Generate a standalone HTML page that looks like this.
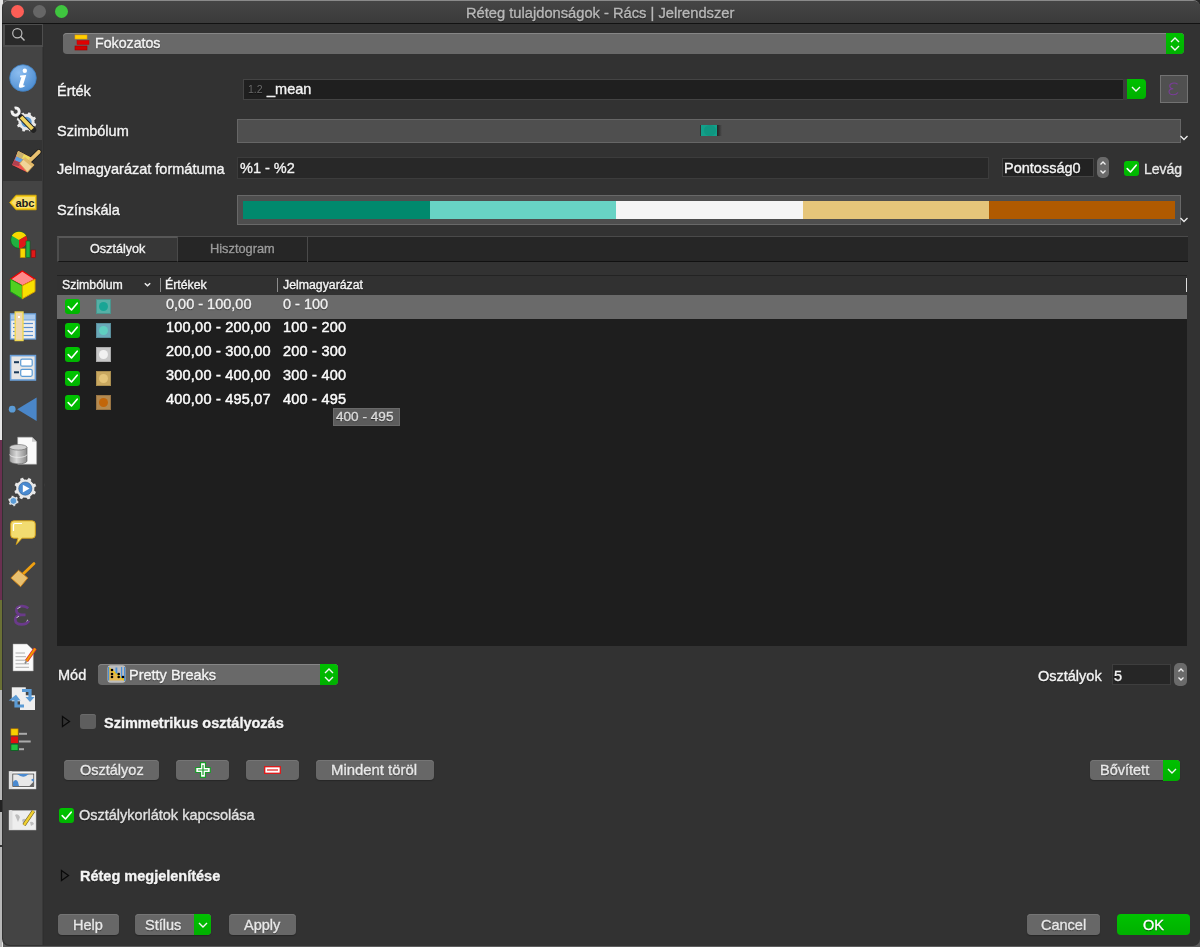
<!DOCTYPE html>
<html><head><meta charset="utf-8">
<style>
*{box-sizing:border-box;margin:0;padding:0}
html,body{width:1200px;height:947px;overflow:hidden;background:#5c5c5c}
body{font-family:"Liberation Sans",sans-serif;font-size:14.5px;color:#f4f4f4;position:relative}
.a{position:absolute}
.t{position:absolute;white-space:nowrap;line-height:1;-webkit-text-stroke:0.35px currentColor;text-shadow:0 0.5px 1px rgba(0,0,0,.55);will-change:transform}
.btn{position:absolute;background:#676767;border-radius:4px;box-shadow:inset 0 1px 0 #757575, 0 1px 1px #262626}
.grn{position:absolute;background:linear-gradient(#00c000,#00b000);border-radius:0 4px 4px 0}
.cb{position:absolute;width:15px;height:15px;background:linear-gradient(#00c400,#00b400);border-radius:3px}
.field{position:absolute;background:#262626;border:1px solid #424242}
</style></head>
<body>
<!-- outside strip -->
<div class="a" style="left:0;top:0;width:3px;height:947px;background:#e6e6e6"></div><div class="a" style="left:0;top:440px;width:2px;height:160px;background:#6a3050"></div><div class="a" style="left:0;top:600px;width:2px;height:90px;background:#6a7035"></div><div class="a" style="left:0;top:690px;width:2px;height:257px;background:#b8b8b8"></div><div class="a" style="left:0;top:800px;width:2px;height:12px;background:#222"></div><div class="a" style="left:0;top:845px;width:2px;height:2px;background:#333"></div>
<div class="a" style="left:1192px;top:0;width:8px;height:8px;background:#262626"></div>
<!-- window -->
<div class="a" style="left:2px;top:0;width:1198px;height:946px;background:#323232;border-radius:7px;border-top:1px solid #8a8a8a"></div>
<!-- title -->
<div class="a" style="left:3px;top:1px;width:1197px;height:22px;background:linear-gradient(#454545,#3a3a3a);border-radius:6px 6px 0 0"></div>
<div class="a" style="left:2px;top:23px;width:1198px;height:1px;background:#121212"></div>
<div class="a" style="left:11px;top:5px;width:13px;height:13px;border-radius:50%;background:#fd5e56"></div>
<div class="a" style="left:33px;top:5px;width:13px;height:13px;border-radius:50%;background:#666"></div>
<div class="a" style="left:55px;top:5px;width:13px;height:13px;border-radius:50%;background:#3fc53f"></div>
<div class="t" style="left:466px;top:5.7px;color:#b8b8b8;font-size:14.7px">Réteg tulajdonságok - Rács | Jelrendszer</div>

<!-- sidebar -->
<div class="a" style="left:3px;top:24px;width:39px;height:921px;background:#444;border-radius:0 0 0 7px"></div>
<div class="a" style="left:3px;top:24px;width:40px;height:23px;background:#292929;border:1px solid #4e4e4e;border-left-width:2px;border-bottom-width:2px"></div>
<svg class="a" style="left:11px;top:27px" width="16" height="16" viewBox="0 0 16 16"><circle cx="6.3" cy="6.3" r="4.6" fill="none" stroke="#bdbdbd" stroke-width="1.2"/><line x1="9.6" y1="9.6" x2="13.5" y2="13.5" stroke="#bdbdbd" stroke-width="1.4"/></svg>
<div class="a" style="left:3px;top:140px;width:39px;height:41px;background:#333"></div>
<div class="a" style="left:42px;top:47px;width:1px;height:898px;background:#393939"></div><div class="a" style="left:43px;top:47px;width:1px;height:898px;background:#2f2f2f"></div>

<!-- sidebar icons -->
<svg class="a" style="left:0;top:0" width="45" height="947" viewBox="0 0 45 947">
 <defs>
  <radialGradient id="gblue" cx="0.35" cy="0.3" r="0.8"><stop offset="0" stop-color="#8cbdf0"/><stop offset="1" stop-color="#4a8bd0"/></radialGradient>
  <linearGradient id="gcyl" x1="0" x2="1"><stop offset="0" stop-color="#9a9a9a"/><stop offset="0.4" stop-color="#d8d8d8"/><stop offset="1" stop-color="#8a8a8a"/></linearGradient>
 </defs>
 <!-- info -->
 <circle cx="23" cy="78" r="13.3" fill="url(#gblue)" stroke="#3f7fc0" stroke-width="0.8"/>
 <circle cx="24.8" cy="70.8" r="2.2" fill="#fff"/>
 <path d="M20.2 75.5 L26.2 75 L23.3 84.5 Q23 86 24.8 85.2 L24.6 86.5 Q21 88.3 19.4 87.5 Q18.4 86.7 19 85 L21.4 77.2 L20 77.2 Z" fill="#fff"/>
 <!-- wrench + gear -->
 <g>
  <path d="M34.86 122.84 L36.61 123.99 L35.65 126.73 L33.57 126.54 L32.77 127.59 L31.82 128.50 L32.24 130.55 L29.63 131.81 L28.29 130.21 L26.98 130.39 L25.66 130.36 L24.51 132.11 L21.77 131.15 L21.96 129.07 L20.91 128.27 L20.00 127.32 L17.95 127.74 L16.69 125.13 L18.29 123.79 L18.11 122.48 L18.14 121.16 L16.39 120.01 L17.35 117.27 L19.43 117.46 L20.23 116.41 L21.18 115.50 L20.76 113.45 L23.37 112.19 L24.71 113.79 L26.02 113.61 L27.34 113.64 L28.49 111.89 L31.23 112.85 L31.04 114.93 L32.09 115.73 L33.00 116.68 L35.05 116.26 L36.31 118.87 L34.71 120.21 L34.89 121.52Z" fill="#e8e8e8" stroke="#222" stroke-width="0.5"/>
  <circle cx="26.5" cy="122" r="5.2" fill="#5b9bd5"/>
  <path d="M14.59 108.12 A3.6 3.6 0 1 1 12.12 110.59" fill="none" stroke="#f2f2f2" stroke-width="3"/><line x1="18" y1="114" x2="21.5" y2="117.5" stroke="#f2f2f2" stroke-width="3.2"/>
  <line x1="21" y1="117" x2="33.5" y2="130" stroke="#222" stroke-width="5.5" stroke-linecap="round"/>
  <line x1="21" y1="117" x2="32.5" y2="129" stroke="#f2d560" stroke-width="3.8"/>
 </g>
 <!-- selected brush -->
 <g>
  <line x1="38.8" y1="151.8" x2="30" y2="160.5" stroke="#1c1c1c" stroke-width="5.4" stroke-linecap="round"/>
  <polygon points="18.1,150.6 31.8,157.6 27,172.6 11.6,165.2" fill="#222"/>
  <polygon points="18.1,151 31.5,157.8 26.9,172.3 12,165" fill="#f05050"/>
  <polygon points="18.1,151 31.5,157.8 30,162.5 16.3,156.3" fill="#eedc60"/>
  <polygon points="16.3,156.3 30,162.5 28.8,166.2 14.6,160.2" fill="#60a0e0"/>
  <polygon points="18.1,151 24,154 22,158.5 16.3,156.3" fill="#c8b070"/>
  <polygon points="14.6,160.2 20,162.4 19,166 12,165" fill="#b04050"/>
  <line x1="38.8" y1="151.8" x2="30" y2="160.5" stroke="#e8c070" stroke-width="3.8" stroke-linecap="round"/>
  <polygon points="24.8,157.7 34.1,164.9 27.4,172.3 19.8,163.6" fill="#f0d498" stroke="#d8a850" stroke-width="0.8"/>
  <polygon points="25,158 33.8,164.8 31.8,166.8 23.5,160" fill="#e0b868"/>
 </g>
 <!-- abc -->
 <polygon points="9.6,202.5 16,195.2 36.2,195.2 36.2,209.8 16,209.8" fill="#f8d020" stroke="#d8a800" stroke-width="0.8"/>
 <polygon points="11.6,202.5 16.6,197 35,197 35,208 16.6,208" fill="#f8e070"/>
 <text x="15.5" y="206.6" font-family="Liberation Sans" font-weight="bold" font-size="11.2" fill="#1a1a1a" letter-spacing="-0.2">abc</text>
 <!-- chart -->
 <circle cx="19" cy="240" r="8.4" fill="#20b040" stroke="#106020" stroke-width="0.8"/>
 <path d="M19 240 L11.8 235.8 A8.4 8.4 0 0 1 26.2 235.8 Z" fill="#f8d800"/>
 <path d="M19 240 L26.2 235.8 A8.4 8.4 0 0 1 19 248.4 Z" fill="#e01818"/>
 <rect x="20.2" y="248.7" width="5" height="9" fill="#f8d800" stroke="#b08000" stroke-width="0.6"/>
 <rect x="26" y="241" width="4" height="16.6" fill="#20b040" stroke="#106020" stroke-width="0.6"/>
 <rect x="31.2" y="250" width="4.2" height="7.6" fill="#e01818" stroke="#801010" stroke-width="0.6"/>
 <!-- cube -->
 <polygon points="22.3,271 35,279.3 22.3,285.7 10.5,279.3" fill="#ff8a8a" stroke="#e00" stroke-width="1.2"/>
 <polygon points="10.5,279.3 22.3,285.7 22.3,298.8 10.5,291.6" fill="#50d020" stroke="#18a018" stroke-width="1"/>
 <polygon points="35,279.3 22.3,285.7 22.3,298.8 35,291.6" fill="#f8e000" stroke="#d8a000" stroke-width="1"/>
 <!-- form table -->
 <rect x="10.5" y="314" width="25" height="25" fill="#eeeeee" stroke="#6a9fd8" stroke-width="1.3"/>
 <rect x="10.5" y="314" width="25" height="6" fill="#a8c8ec" stroke="#6a9fd8" stroke-width="1"/>
 <line x1="13" y1="323.5" x2="33" y2="323.5" stroke="#5a8fd0" stroke-width="1.2"/>
 <line x1="13" y1="327.5" x2="33" y2="327.5" stroke="#5a8fd0" stroke-width="1.2"/>
 <line x1="13" y1="331.5" x2="33" y2="331.5" stroke="#5a8fd0" stroke-width="1.2"/>
 <line x1="13" y1="335.5" x2="33" y2="335.5" stroke="#5a8fd0" stroke-width="1.2"/>
 <rect x="15.2" y="312" width="7.8" height="28.5" fill="#efd8b0" stroke="#f0d850" stroke-width="1.4"/>
 <rect x="18" y="316" width="2" height="2" fill="#fff"/>
 <!-- attr form -->
 <rect x="10.6" y="355.6" width="24.8" height="24.4" fill="#e6e6e6" stroke="#6a9fd8" stroke-width="1.6"/>
 <rect x="14" y="361.2" width="5" height="2" fill="#1a3a5a"/>
 <rect x="14" y="371.3" width="5" height="2" fill="#1a3a5a"/>
 <rect x="20.7" y="359.2" width="11.5" height="7" rx="1.5" fill="#fff" stroke="#5b9bd5" stroke-width="1.2"/>
 <rect x="20.7" y="369.3" width="11.5" height="7" rx="1.5" fill="#fff" stroke="#5b9bd5" stroke-width="1.2"/>
 <!-- joins -->
 <circle cx="12.2" cy="409.2" r="3.4" fill="#5b9bd5"/>
 <polygon points="17.2,409.2 36.6,397.4 36.6,421" fill="#4a86c8"/>
 <!-- database -->
 <path d="M17.7 437.2 L32 437.2 L36.6 441.8 L36.6 464.2 L17.7 464.2 Z" fill="#fafafa" stroke="#aaa" stroke-width="0.5"/>
 <path d="M32 437.2 L32 441.8 L36.6 441.8 Z" fill="#ccc"/>
 <path d="M9.6 447.3 L9.6 461 A8.7 2.9 0 0 0 27 461 L27 447.3 Z" fill="url(#gcyl)" stroke="#555" stroke-width="0.6"/>
 <ellipse cx="18.3" cy="447.3" rx="8.7" ry="2.8" fill="#d0d0d0" stroke="#666" stroke-width="0.6"/>
 <path d="M9.6 454.5 A8.7 2.9 0 0 0 27 454.5" fill="none" stroke="#eee" stroke-width="0.8"/>
 <!-- gear play -->
 <path d="M34.51 490.47 L36.31 491.94 L34.94 494.87 L32.66 494.45 L31.66 495.53 L30.49 496.43 L30.72 498.74 L27.68 499.85 L26.37 497.94 L24.90 497.99 L23.43 497.81 L21.96 499.61 L19.03 498.24 L19.45 495.96 L18.37 494.96 L17.47 493.79 L15.16 494.02 L14.05 490.98 L15.96 489.67 L15.91 488.20 L16.09 486.73 L14.29 485.26 L15.66 482.33 L17.94 482.75 L18.94 481.67 L20.11 480.77 L19.88 478.46 L22.92 477.35 L24.23 479.26 L25.70 479.21 L27.17 479.39 L28.64 477.59 L31.57 478.96 L31.15 481.24 L32.23 482.24 L33.13 483.41 L35.44 483.18 L36.55 486.22 L34.64 487.53 L34.69 489.00Z" fill="#e8e8e8" stroke="#222" stroke-width="0.5"/>
 <circle cx="25.3" cy="488.6" r="6.6" fill="#4a8ad0" stroke="#2a5a90" stroke-width="0.6"/>
 <polygon points="22.8,484.8 29.6,488.6 22.8,492.4" fill="#fff"/>
 <path d="M17.70 500.90 L18.86 501.59 L18.22 503.55 L16.88 503.43 L16.28 504.10 L15.55 504.62 L15.53 505.97 L13.52 506.40 L12.95 505.18 L12.07 504.99 L11.25 504.62 L10.07 505.28 L8.70 503.75 L9.47 502.65 L9.19 501.79 L9.10 500.90 L7.94 500.21 L8.58 498.25 L9.92 498.37 L10.52 497.70 L11.25 497.18 L11.27 495.83 L13.28 495.40 L13.85 496.62 L14.73 496.81 L15.55 497.18 L16.73 496.52 L18.10 498.05 L17.33 499.15 L17.61 500.01Z" fill="#e8e8e8" stroke="#222" stroke-width="0.4"/>
 <circle cx="13.4" cy="500.9" r="3.4" fill="#5b9bd5" stroke="#eaeaea" stroke-width="0.8"/>
 <!-- speech bubble -->
 <path d="M14 520.8 L32 520.8 Q35.3 520.8 35.3 524 L35.3 535 Q35.3 538.2 32 538.2 L22 538.2 L16.3 544.5 L18 538.2 L14 538.2 Q10.7 538.2 10.7 535 L10.7 524 Q10.7 520.8 14 520.8 Z" fill="#f2dc70" stroke="#d8a010" stroke-width="0.9"/>
 <path d="M13.5 531 L13.5 525 Q13.5 523.5 15 523.5 L22 523.5" fill="none" stroke="#fff" stroke-width="1.2"/>
 <!-- brush 2 -->
 <line x1="34" y1="563.6" x2="22.5" y2="574.5" stroke="#f0a010" stroke-width="2.8" stroke-linecap="round"/>
 <polygon points="18.5,570.3 27.8,577.9 20.6,586.7 10.9,577.9" fill="#e8c070" stroke="#d08010" stroke-width="0.9"/>
 <!-- epsilon -->
 <path d="M28.3 608.3 Q25.5 605.8 21.5 606.2 Q16.3 606.8 16.4 610.6 Q16.6 614.4 21.8 614.9 L25.5 614.9 M21.8 614.9 Q15.2 615.3 15.3 619.8 Q15.6 624.3 21.8 624.4 Q26.8 624.4 29 620.8" fill="none" stroke="#6a3a8a" stroke-width="2.7"/>
 <path d="M17.5 609 Q18.5 607.3 20.5 607" fill="none" stroke="#d8d8d8" stroke-width="0.9"/><path d="M16.7 618 Q17.3 616.6 19 616.2" fill="none" stroke="#d8d8d8" stroke-width="0.9"/><path d="M26.5 621.2 L28 619.8" fill="none" stroke="#d8d8d8" stroke-width="0.9"/>
 <!-- doc edit -->
 <path d="M13 644 L27 644 L33.3 650 L33.3 671 L13 671 Z" fill="#fafafa" stroke="#9a9a9a" stroke-width="0.5"/>
 <line x1="15.5" y1="653" x2="25" y2="653" stroke="#9a9a9a" stroke-width="0.8"/>
 <line x1="15.5" y1="656.7" x2="26" y2="656.7" stroke="#9a9a9a" stroke-width="0.8"/>
 <line x1="15.5" y1="660.2" x2="26" y2="660.2" stroke="#9a9a9a" stroke-width="0.8"/>
 <line x1="15.5" y1="663.8" x2="29" y2="663.8" stroke="#9a9a9a" stroke-width="0.8"/>
 <line x1="15.5" y1="667.3" x2="29" y2="667.3" stroke="#9a9a9a" stroke-width="0.8"/>
 <line x1="35.3" y1="648.5" x2="26.5" y2="661" stroke="#e03030" stroke-width="3.6"/>
 <line x1="35.3" y1="648.5" x2="26.5" y2="661" stroke="#f0a000" stroke-width="2"/>
 <line x1="26.5" y1="661" x2="25" y2="663.5" stroke="#888" stroke-width="1.6"/>
 <!-- arrows -->
 <rect x="11.8" y="687.3" width="14" height="14" fill="#efefef"/>
 <rect x="20" y="695.3" width="15" height="14.7" fill="#efefef"/>
 <path d="M22 690.5 L30 690.5 L30 697" fill="none" stroke="#5b9bd5" stroke-width="3.2"/>
 <polygon points="25.5,697 34.5,697 30,702" fill="#5b9bd5"/>
 <path d="M24 706 L16 706 L16 700" fill="none" stroke="#5b9bd5" stroke-width="3.2"/>
 <polygon points="8.6,700.5 16,694.8 20.5,700.5" fill="#5b9bd5"/>
 <!-- legend -->
 <rect x="10.9" y="728.8" width="7.2" height="6.5" fill="#f8d000" stroke="#b87000" stroke-width="0.6"/>
 <rect x="10.9" y="736.5" width="7.2" height="6.5" fill="#e01010"/>
 <rect x="10.9" y="744.1" width="7.2" height="6.5" fill="#20c040" stroke="#0a5a20" stroke-width="0.8"/>
 <rect x="19" y="732.8" width="8" height="2" fill="#aaa"/>
 <rect x="19" y="740.5" width="11.7" height="2" fill="#aaa"/>
 <rect x="19" y="748.2" width="5" height="2" fill="#aaa"/>
 <!-- map -->
 <rect x="9" y="771.5" width="27" height="17.5" fill="#f4f4f4" stroke="#bbb" stroke-width="0.5"/>
 <rect x="9" y="771" width="3.5" height="18" rx="1.5" fill="#ddd"/>
 <rect x="12.8" y="774" width="21" height="12.5" fill="#e8e8e8" stroke="#333" stroke-width="0.7"/>
 <path d="M17 774 Q22 778 26 776 Q28 774.5 29 774 Z" fill="#4a8ad0"/>
 <path d="M13 786 L13 782 Q16 778 18 782 L19 786 Z" fill="#4a8ad0"/>
 <path d="M31 780 Q33 778 33.8 779 L33.8 782 Z" fill="#4a8ad0"/>
 <path d="M29 786.5 L33.8 781.5 L33.8 786.5 Z" fill="#666"/>
 <!-- map edit -->
 <rect x="9" y="810.5" width="27" height="19.5" fill="#eeeeee" stroke="#bbb" stroke-width="0.5"/>
 <rect x="9" y="810" width="3.5" height="20" rx="1.5" fill="#ddd"/>
 <path d="M15 815 Q18 813 20 817 L18 822 Z M22 820 Q25 817 27 821 L24 826 Z M30 822 Q33 821 34 824 L31 826Z" fill="#bdbdbd"/>
 <line x1="33.5" y1="811" x2="24" y2="825" stroke="#6a5a20" stroke-width="3.6"/>
 <line x1="33.5" y1="811" x2="24" y2="825" stroke="#f0d030" stroke-width="2.4"/>
 <!-- splitter dot -->
 <circle cx="46" cy="485" r="2" fill="#3a3a3a"/>
</svg>

<!-- Fokozatos combo -->
<div class="a" style="left:63px;top:33px;width:1121px;height:21px;background:#696969;border-radius:4px;box-shadow:inset 0 1px 0 #868686"></div>
<div class="grn" style="left:1166px;top:33px;width:18px;height:21px"></div>
<svg class="a" style="left:1169px;top:36px" width="12" height="16" viewBox="0 0 12 16"><polyline points="2,6 6,2 10,6" fill="none" stroke="#f4f4f4" stroke-width="1.4"/><polyline points="2,10 6,14 10,10" fill="none" stroke="#f4f4f4" stroke-width="1.4"/></svg>
<svg class="a" style="left:74px;top:34px" width="16" height="17" viewBox="0 0 16 17"><rect x="1" y="1" width="12" height="4" fill="#ffd000" stroke="#f0a000" stroke-width="0.6"/><rect x="3" y="6.5" width="12" height="4" fill="#e00000" stroke="#b00" stroke-width="0.5"/><rect x="1" y="12" width="12" height="4" fill="#d00000" stroke="#900" stroke-width="0.6"/></svg>
<div class="t" style="left:94.5px;top:36px;font-size:14.2px">Fokozatos</div>

<!-- Érték -->
<div class="t" style="left:57px;top:83.7px">Érték</div>
<div class="field" style="left:243px;top:79px;width:884px;height:21px;background:#1f1f1f;border-color:#444"></div>
<div class="t" style="left:248px;top:83.5px;font-size:10.5px;color:#6a6a6a;-webkit-text-stroke:0">1.2</div>
<div class="t" style="left:266.5px;top:82px">_mean</div>
<div class="a" style="left:1123px;top:79px;width:4px;height:21px;background:#3c3c3c"></div><div class="grn" style="left:1127px;top:79px;width:19px;height:20px"></div>
<svg class="a" style="left:1130px;top:83px" width="12" height="12" viewBox="0 0 12 12"><polyline points="2,4 6,8 10,4" fill="none" stroke="#f4f4f4" stroke-width="1.4"/></svg>
<div class="a" style="left:1160px;top:75px;width:28px;height:28px;background:#505050;border:1px solid #727272"></div><svg class="a" style="left:1160px;top:75px" width="28" height="28" viewBox="0 0 28 28"><path d="M17.6 9.2 Q15.5 7.6 12.6 8.2 Q9.5 8.9 9.7 11.2 Q10 13.5 13.3 13.8 Q9 14.1 9 16.8 Q9.3 19.8 13.2 19.8 Q16.5 19.8 18 17.5" fill="none" stroke="#7a3d98" stroke-width="1.1"/></svg>

<!-- Szimbólum -->
<div class="t" style="left:57px;top:123.7px">Szimbólum</div>
<div class="a" style="left:237px;top:119px;width:944px;height:24px;background:#4f4f4f;border:1px solid #666"></div>
<div class="a" style="left:716px;top:125px;width:6px;height:11px;background:linear-gradient(90deg,#1a1a1a,rgba(40,40,40,0))"></div><div class="a" style="left:700px;top:125px;width:17px;height:11px;background:#12a08a;border-left:1px solid #333"><div class="a" style="left:3px;top:0;width:12px;height:11px;border-radius:50%;background:#0f9680"></div></div>
<svg class="a" style="left:1179px;top:134px" width="10" height="8" viewBox="0 0 10 8"><polyline points="1.5,2 5,5.5 8.5,2" fill="none" stroke="#eee" stroke-width="1.3"/></svg>

<!-- Jelmagyarázat -->
<div class="t" style="left:57px;top:161.7px">Jelmagyarázat formátuma</div>
<div class="field" style="left:237px;top:157px;width:752px;height:22px;background:#282828;border-color:#3c3c3c"></div>
<div class="t" style="left:240px;top:161px">%1 - %2</div>
<div class="field" style="left:1002px;top:158px;width:92px;height:19px;background:#222;border-color:#444"></div>
<div class="t" style="left:1004px;top:160.5px">Pontosság0</div>
<div class="a" style="left:1097px;top:157px;width:12px;height:21px;background:#6a6a6a;border-radius:5px"></div><svg class="a" style="left:1097px;top:157px" width="12" height="21" viewBox="0 0 12 21"><polyline points="3.5,7.5 6,5.0 8.5,7.5" fill="none" stroke="#f0f0f0" stroke-width="1.3"/><polyline points="3.5,13.5 6,16.0 8.5,13.5" fill="none" stroke="#f0f0f0" stroke-width="1.3"/></svg>
<div class="cb" style="left:1124px;top:161px"><svg width="15" height="15" viewBox="0 0 15 15"><polyline points="3.2,7.6 6.5,11 12.2,4.2" fill="none" stroke="#fff" stroke-width="1.6" stroke-linecap="round" stroke-linejoin="round"/></svg></div>
<div class="t" style="left:1144px;top:162px;color:#e8e8e8;font-size:14px">Levág</div>

<!-- Színskála -->
<div class="t" style="left:57px;top:203.2px">Színskála</div>
<div class="a" style="left:237px;top:195px;width:944px;height:30px;background:#4e4e4e;border:1px solid #686868"></div>
<div class="a" style="left:243px;top:201px;width:187px;height:18px;background:#00896d"></div>
<div class="a" style="left:430px;top:201px;width:186px;height:18px;background:#68d3c4"></div>
<div class="a" style="left:616px;top:201px;width:187px;height:18px;background:#f5f5f5"></div>
<div class="a" style="left:803px;top:201px;width:186px;height:18px;background:#e5c57a"></div>
<div class="a" style="left:989px;top:201px;width:186px;height:18px;background:#b05a00"></div>
<svg class="a" style="left:1179px;top:216px" width="10" height="8" viewBox="0 0 10 8"><polyline points="1.5,2 5,5.5 8.5,2" fill="none" stroke="#eee" stroke-width="1.3"/></svg>

<!-- tabs -->
<div class="a" style="left:57px;top:236px;width:1131px;height:26px;background:#262626;border-top:1px solid #4a4a4a;border-bottom:1px solid #111"></div>
<div class="a" style="left:57px;top:236px;width:121px;height:26px;background:#373737;border-top:2px solid #575757;border-right:1px solid #4a4a4a;border-left:2px solid #4e4e4e;border-bottom:1px solid #161616"></div>
<div class="a" style="left:178px;top:236px;width:130px;height:26px;border-right:1px solid #4a4a4a"></div>
<div class="t" style="left:89.5px;top:242.8px;font-size:12.6px;color:#f2f2f2">Osztályok</div>
<div class="t" style="left:210px;top:242.8px;font-size:12.8px;color:#9a9a9a">Hisztogram</div>

<!-- table -->
<div class="a" style="left:57px;top:275px;width:1130px;height:371px;background:#1e1e1e"></div>
<div class="a" style="left:57px;top:275px;width:1130px;height:20px;background:#313131;border-top:1px solid #232323"></div>
<div class="t" style="left:62px;top:279px;font-size:12.3px">Szimbólum</div>
<svg class="a" style="left:143px;top:281px" width="9" height="7" viewBox="0 0 9 7"><polyline points="1.8,2.2 4.5,4.8 7.2,2.2" fill="none" stroke="#eee" stroke-width="1.5"/></svg>
<div class="a" style="left:159.5px;top:278px;width:1.2px;height:14px;background:#8c8c8c"></div>
<div class="t" style="left:165px;top:279px;font-size:12.3px">Értékek</div>
<div class="a" style="left:277px;top:278px;width:1.2px;height:14px;background:#8c8c8c"></div>
<div class="t" style="left:282.5px;top:279px;font-size:12.3px">Jelmagyarázat</div>
<div class="a" style="left:1186px;top:278px;width:1px;height:14px;background:#ddd"></div>
<div class="a" style="left:57px;top:295px;width:1130px;height:24px;background:#6a6a6a"></div>
<div class="cb" style="left:65px;top:299px"><svg width="15" height="15" viewBox="0 0 15 15"><polyline points="3.2,7.6 6.5,11 12.2,4.2" fill="none" stroke="#fff" stroke-width="1.6" stroke-linecap="round" stroke-linejoin="round"/></svg></div>
<div class="a" style="left:96px;top:299px;width:15px;height:15px;background:#56b0a6;box-shadow:inset 0 0 0 1px rgba(0,0,0,.15)"><div class="a" style="left:3px;top:3px;width:9px;height:9px;border-radius:50%;background:#19a595"></div></div>
<div class="t" style="left:165.5px;top:296.5px;color:#f2f2f2">0,00 - 100,00</div>
<div class="t" style="left:283px;top:296.5px;color:#f2f2f2">0 - 100</div>
<div class="cb" style="left:65px;top:323px"><svg width="15" height="15" viewBox="0 0 15 15"><polyline points="3.2,7.6 6.5,11 12.2,4.2" fill="none" stroke="#fff" stroke-width="1.6" stroke-linecap="round" stroke-linejoin="round"/></svg></div>
<div class="a" style="left:96px;top:323px;width:15px;height:15px;background:#6aa8b8;box-shadow:inset 0 0 0 1px rgba(0,0,0,.15)"><div class="a" style="left:3px;top:3px;width:9px;height:9px;border-radius:50%;background:#5fcfc0"></div></div>
<div class="t" style="left:165.5px;top:320px;color:#fafafa;letter-spacing:0.22px;-webkit-text-stroke:0.5px #fafafa">100,00 - 200,00</div>
<div class="t" style="left:283px;top:320px;color:#fafafa;letter-spacing:0.22px;-webkit-text-stroke:0.5px #fafafa">100 - 200</div>
<div class="cb" style="left:65px;top:347px"><svg width="15" height="15" viewBox="0 0 15 15"><polyline points="3.2,7.6 6.5,11 12.2,4.2" fill="none" stroke="#fff" stroke-width="1.6" stroke-linecap="round" stroke-linejoin="round"/></svg></div>
<div class="a" style="left:96px;top:347px;width:15px;height:15px;background:#c8c8c8;box-shadow:inset 0 0 0 1px rgba(0,0,0,.15)"><div class="a" style="left:3px;top:3px;width:9px;height:9px;border-radius:50%;background:#f0f0f0"></div></div>
<div class="t" style="left:165.5px;top:344px;color:#fafafa;letter-spacing:0.22px;-webkit-text-stroke:0.5px #fafafa">200,00 - 300,00</div>
<div class="t" style="left:283px;top:344px;color:#fafafa;letter-spacing:0.22px;-webkit-text-stroke:0.5px #fafafa">200 - 300</div>
<div class="cb" style="left:65px;top:371px"><svg width="15" height="15" viewBox="0 0 15 15"><polyline points="3.2,7.6 6.5,11 12.2,4.2" fill="none" stroke="#fff" stroke-width="1.6" stroke-linecap="round" stroke-linejoin="round"/></svg></div>
<div class="a" style="left:96px;top:371px;width:15px;height:15px;background:#c9a860;box-shadow:inset 0 0 0 1px rgba(0,0,0,.15)"><div class="a" style="left:3px;top:3px;width:9px;height:9px;border-radius:50%;background:#e5c57a"></div></div>
<div class="t" style="left:165.5px;top:368px;color:#fafafa;letter-spacing:0.22px;-webkit-text-stroke:0.5px #fafafa">300,00 - 400,00</div>
<div class="t" style="left:283px;top:368px;color:#fafafa;letter-spacing:0.22px;-webkit-text-stroke:0.5px #fafafa">300 - 400</div>
<div class="cb" style="left:65px;top:395px"><svg width="15" height="15" viewBox="0 0 15 15"><polyline points="3.2,7.6 6.5,11 12.2,4.2" fill="none" stroke="#fff" stroke-width="1.6" stroke-linecap="round" stroke-linejoin="round"/></svg></div>
<div class="a" style="left:96px;top:395px;width:15px;height:15px;background:#b48a50;box-shadow:inset 0 0 0 1px rgba(0,0,0,.15)"><div class="a" style="left:3px;top:3px;width:9px;height:9px;border-radius:50%;background:#c2660a"></div></div>
<div class="t" style="left:165.5px;top:392px;color:#fafafa;letter-spacing:0.22px;-webkit-text-stroke:0.5px #fafafa">400,00 - 495,07</div>
<div class="t" style="left:283px;top:392px;color:#fafafa;letter-spacing:0.22px;-webkit-text-stroke:0.5px #fafafa">400 - 495</div>
<div class="a" style="left:333px;top:408px;width:67px;height:18px;background:#5c5c5c;border:1px solid #6a6a6a"></div>
<div class="t" style="left:335.5px;top:410px;font-size:13.6px;color:#dcdcdc">400 - 495</div>

<!-- Mód -->
<div class="t" style="left:57.5px;top:668.3px">Mód</div>
<div class="a" style="left:98px;top:664px;width:240px;height:21px;background:#696969;border-radius:4px;box-shadow:inset 0 1px 0 #868686"></div>
<div class="grn" style="left:320px;top:664px;width:18px;height:21px"></div>
<svg class="a" style="left:323px;top:667px" width="12" height="16" viewBox="0 0 12 16"><polyline points="2,6 6,2 10,6" fill="none" stroke="#f4f4f4" stroke-width="1.4"/><polyline points="2,10 6,14 10,10" fill="none" stroke="#f4f4f4" stroke-width="1.4"/></svg>
<svg class="a" style="left:107px;top:665px" width="19" height="18" viewBox="0 0 19 18"><rect x="0.5" y="0.3" width="18" height="17.5" rx="3" fill="#bdbdbd"/><polygon points="1.5,3 17.5,15.5 17.5,15.5 1.5,15.5" fill="#e4b850"/><line x1="1.5" y1="2.5" x2="17.5" y2="15.5" stroke="#f0c800" stroke-width="1.3"/><rect x="1" y="2" width="1.2" height="13.5" fill="#4a90d8"/><rect x="8.5" y="2.5" width="1.8" height="6" fill="#4a90d8"/><rect x="14" y="2" width="1.2" height="11" fill="#4a90d8"/><rect x="17" y="2" width="1.2" height="14" fill="#4a90d8"/><circle cx="5" cy="5" r="1.3" fill="#000"/><circle cx="5" cy="9" r="1.3" fill="#000"/><circle cx="5" cy="12" r="1.3" fill="#000"/><circle cx="11.7" cy="9" r="1.3" fill="#000"/><circle cx="11.7" cy="12" r="1.3" fill="#000"/><circle cx="16" cy="12" r="1.3" fill="#000"/></svg><div class="t" style="left:129px;top:668.3px">Pretty Breaks</div>

<div class="t" style="left:1038px;top:668.5px">Osztályok</div>
<div class="field" style="left:1112px;top:664px;width:59px;height:21px;background:#262626;border-color:#3e3e3e"></div>
<div class="t" style="left:1114px;top:668.5px">5</div>
<div class="a" style="left:1174px;top:663px;width:13px;height:23px;background:#6a6a6a;border-radius:5px"></div><svg class="a" style="left:1174.5px;top:663px" width="12" height="23" viewBox="0 0 12 23"><polyline points="3.5,8.5 6,6.0 8.5,8.5" fill="none" stroke="#f0f0f0" stroke-width="1.3"/><polyline points="3.5,14.5 6,17.0 8.5,14.5" fill="none" stroke="#f0f0f0" stroke-width="1.3"/></svg>

<!-- Szimmetrikus -->
<svg class="a" style="left:61px;top:715px" width="11" height="13" viewBox="0 0 11 13"><polygon points="1.5,1.5 8.5,6.5 1.5,11.5" fill="none" stroke="#0a0a0a" stroke-width="1.3"/></svg>
<div class="a" style="left:80px;top:714px;width:16px;height:15px;background:#5e5e5e;border-radius:3px;box-shadow:inset 0 1px 0 #6a6a6a"></div>
<div class="t" style="left:103.5px;top:715.5px;font-weight:bold">Szimmetrikus osztályozás</div>

<!-- buttons -->
<div class="btn" style="left:64px;top:760px;width:95px;height:20px"></div>
<div class="t" style="left:79.6px;top:763px;color:#e8e8e8">Osztályoz</div>
<div class="btn" style="left:176px;top:760px;width:53px;height:20px"></div><svg class="a" style="left:195px;top:762px" width="16" height="16" viewBox="0 0 16 16"><path d="M5.5 0.7 H10.5 V5.5 H15.3 V10.5 H10.5 V15.3 H5.5 V10.5 H0.7 V5.5 H5.5 Z" fill="#fff" stroke="#1a9a2a" stroke-width="1.2"/><path d="M8 3 V13 M3 8 H13" stroke="#1aa02a" stroke-width="1.2"/></svg>
<div class="btn" style="left:246px;top:760px;width:53px;height:20px"></div><svg class="a" style="left:264px;top:766px" width="17" height="8" viewBox="0 0 17 8"><rect x="0.7" y="0.7" width="15.6" height="6.6" fill="#fff" stroke="#e01818" stroke-width="1.3"/><line x1="3" y1="4" x2="14" y2="4" stroke="#e01818" stroke-width="1.2"/></svg>
<div class="btn" style="left:316px;top:760px;width:118px;height:20px"></div>
<div class="t" style="left:331px;top:762.5px;color:#e8e8e8;font-size:14.9px">Mindent töröl</div>
<div class="btn" style="left:1090px;top:760px;width:90px;height:20px"></div>
<div class="grn" style="left:1163px;top:760px;width:17px;height:20.5px"></div><svg class="a" style="left:1165.5px;top:764.5px" width="12" height="12" viewBox="0 0 12 12"><polyline points="2,4 6,8 10,4" fill="none" stroke="#f4f4f4" stroke-width="1.4"/></svg>
<div class="t" style="left:1100px;top:762.8px;color:#e8e8e8">Bővített</div>

<!-- Osztálykorlátok -->
<div class="cb" style="left:59px;top:808px"><svg width="15" height="15" viewBox="0 0 15 15"><polyline points="3.2,7.6 6.5,11 12.2,4.2" fill="none" stroke="#fff" stroke-width="1.6" stroke-linecap="round" stroke-linejoin="round"/></svg></div>
<div class="t" style="left:79px;top:808.3px;color:#e2e2e2">Osztálykorlátok kapcsolása</div>

<svg class="a" style="left:60px;top:869px" width="11" height="13" viewBox="0 0 11 13"><polygon points="1.5,1.5 8.5,6.5 1.5,11.5" fill="none" stroke="#0a0a0a" stroke-width="1.3"/></svg>
<div class="t" style="left:80px;top:868.5px;font-weight:bold">Réteg megjelenítése</div>

<!-- bottom -->
<div class="btn" style="left:58px;top:914px;width:61px;height:21px"></div>
<div class="t" style="left:73px;top:917.5px;color:#e8e8e8">Help</div>
<div class="btn" style="left:135px;top:914px;width:76px;height:21px"></div>
<div class="grn" style="left:194px;top:914px;width:17px;height:21px"></div><svg class="a" style="left:196.5px;top:918.5px" width="12" height="12" viewBox="0 0 12 12"><polyline points="2,4 6,8 10,4" fill="none" stroke="#f4f4f4" stroke-width="1.4"/></svg>
<div class="t" style="left:145px;top:917.5px;color:#e8e8e8">Stílus</div>
<div class="btn" style="left:229px;top:914px;width:67px;height:21px"></div>
<div class="t" style="left:244px;top:917.5px;color:#e8e8e8">Apply</div>
<div class="btn" style="left:1027px;top:914px;width:73px;height:21px"></div>
<div class="t" style="left:1041px;top:917.5px;color:#e8e8e8">Cancel</div>
<div class="a" style="left:1117px;top:914px;width:73px;height:21px;background:linear-gradient(#00c200,#00b000);border-radius:4px"></div>
<div class="t" style="left:1143px;top:917.5px;color:#fff">OK</div>
</body></html>
